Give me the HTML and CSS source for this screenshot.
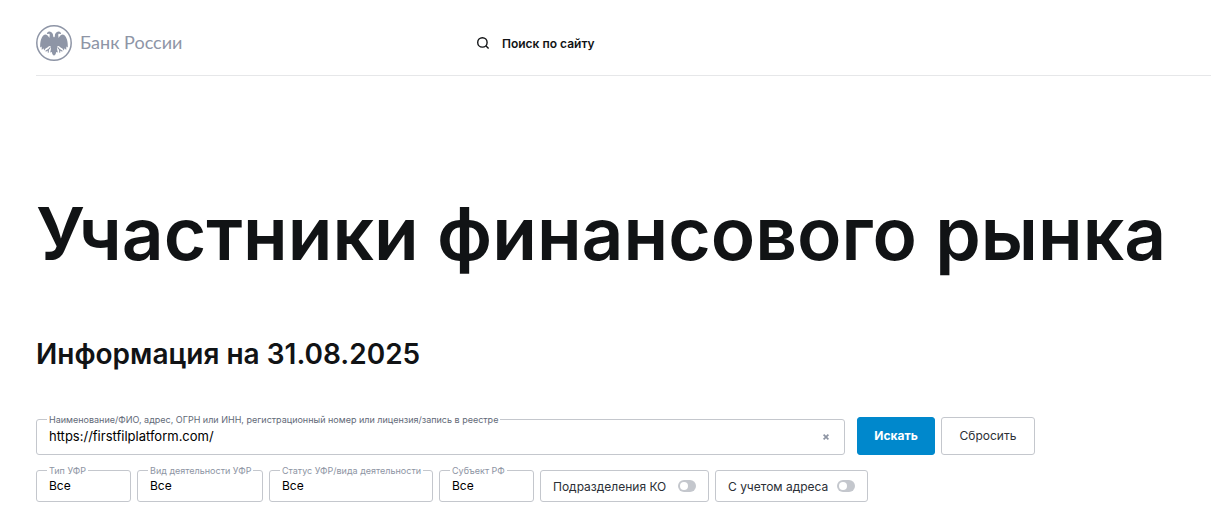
FILE: index.html
```
<!DOCTYPE html>
<html lang="ru">
<head>
<meta charset="utf-8">
<meta name="viewport" content="width=device-width, initial-scale=1">
<title>Участники финансового рынка</title>
<link rel="stylesheet" href="styles.css">
</head>
<body>
<header class="header">
  <a class="logo" href="#">
    <svg class="logo-mark" viewBox="0 0 36 36" aria-hidden="true">
      <circle cx="18" cy="18" r="17.2" fill="none" stroke="currentColor" stroke-width="1.5"/>
      <g fill="currentColor">
        <path id="half" d="M18 12.4 L17.2 11.6 C17.3 8.4 15.6 6.2 13.2 6.4 C11.9 6.5 11 7.6 10.9 9 L13.4 8.8 C14.2 10.2 13.4 11.4 13.4 13 C12.2 10.2 9.6 8.4 7.8 10 C5.2 12.4 4 16.4 4.2 22.6 L5.6 21.4 L5.8 25 L7.4 23.2 L8.2 25.6 L9.6 23.4 L11.4 22.6 L13.2 21 L14.8 21.6 L15 23.4 L14.2 27.6 L15.8 27 L16.4 29.2 L18 30.8 Z"/>
        <path d="M18 12.4 L18.8 11.6 C18.7 8.4 20.4 6.2 22.8 6.4 C24.1 6.5 25 7.6 25.1 9 L22.6 8.8 C21.8 10.2 22.6 11.4 22.6 13 C23.8 10.2 26.4 8.4 28.2 10 C30.8 12.4 32 16.4 31.8 22.6 L30.4 21.4 L30.2 25 L28.6 23.2 L27.8 25.6 L26.4 23.4 L24.6 22.6 L22.8 21 L21.2 21.6 L21 23.4 L21.8 27.6 L20.2 27 L19.6 29.2 L18 30.8 Z"/>
      </g>
      <g fill="none" stroke="currentColor" stroke-width="1.1">
        <path d="M14.4 22.4 L12.4 24.6 L9.6 26.2 M12.4 24.6 L12.2 27.6"/>
        <path d="M21.6 22.4 L23.6 24.6 L26.4 26.2 M23.6 24.6 L23.8 27.6"/>
      </g>
    </svg>
    <span class="logo-text">Банк России</span>
  </a>
  <button class="site-search" type="button">
    <svg class="site-search-icon" viewBox="0 0 14 14" aria-hidden="true">
      <circle cx="6.4" cy="6.4" r="4.7" fill="none" stroke="currentColor" stroke-width="1.4"/>
      <path d="M9.8 9.8 L12.6 12.6" stroke="currentColor" stroke-width="1.4"/>
    </svg>
    Поиск по сайту
  </button>
</header>
<main class="content">
  <h1 class="title">Участники финансового рынка</h1>
  <h2 class="subtitle">Информация на 31.08.2025</h2>
  <form class="form">
    <div class="search-row">
      <div class="field field-search">
        <label class="field-label" for="query">Наименование/ФИО, адрес, ОГРН или ИНН, регистрационный номер или лицензия/запись в реестре</label>
        <input class="field-input" id="query" type="text" value="https://firstfilplatform.com/">
        <button class="clear" type="button" aria-label="Очистить">
          <svg class="clear-icon" viewBox="0 0 6 6" aria-hidden="true"><path d="M.6 .6 L5.4 5.4 M5.4 .6 L.6 5.4" stroke="currentColor" stroke-width="1.7"/></svg>
        </button>
      </div>
      <div class="actions">
        <button class="button button-primary" type="submit">Искать</button>
        <button class="button button-reset" type="reset">Сбросить</button>
      </div>
    </div>
    <div class="filters">
      <div class="field field-short">
        <label class="field-label" for="type">Тип УФР</label>
        <select class="field-select" id="type"><option>Все</option></select>
      </div>
      <div class="field field-medium">
        <label class="field-label" for="activity">Вид деятельности УФР</label>
        <select class="field-select" id="activity"><option>Все</option></select>
      </div>
      <div class="field field-long">
        <label class="field-label" for="status">Статус УФР/вида деятельности</label>
        <select class="field-select" id="status"><option>Все</option></select>
      </div>
      <div class="field field-short">
        <label class="field-label" for="region">Субъект РФ</label>
        <select class="field-select" id="region"><option>Все</option></select>
      </div>
      <label class="toggle toggle-wide">Подразделения КО <input class="switch" type="checkbox"></label>
      <label class="toggle">С учетом адреса <input class="switch" type="checkbox"></label>
    </div>
  </form>
</main>
</body>
</html>
```
FILE: styles.css
```
* { box-sizing: border-box; }

body {
  margin: 0;
  background: #fff;
  color: #111315;
  font-family: Inter, "Liberation Sans", sans-serif;
  font-size: 12px;
}

button, input, select { font: inherit; }

.header {
  display: flex;
  align-items: center;
  margin-left: 36px;
  padding: 25px 0 14px;
  border-bottom: 1px solid #e6e7e9;
}

.logo {
  display: flex;
  align-items: center;
  gap: 8px;
  width: 440px;
  color: #8e95a6;
  text-decoration: none;
}

.logo-mark { width: 36px; height: 36px; }

.logo-text {
  padding-bottom: 2px;
  font-family: Lato, sans-serif;
  font-size: 18px;
  line-height: 20px;
}

.site-search {
  display: flex;
  align-items: center;
  gap: 12px;
  padding: 0;
  border: 0;
  background: none;
  color: #111315;
  font-weight: 600;
}

.site-search-icon { width: 14px; height: 14px; }

.content { padding: 108px 36px 24px; }

.title {
  margin: 0;
  font-size: 73px;
  font-weight: 600;
  line-height: 100px;
  white-space: nowrap;
}

.subtitle {
  margin: 52px 0 0;
  font-size: 28px;
  font-weight: 600;
  line-height: 36px;
}

.form {
  max-width: 999px;
  margin-top: 45px;
}

.search-row {
  display: flex;
  align-items: flex-end;
  gap: 12px;
}

.actions { display: flex; gap: 6px; }

.field {
  position: relative;
  display: flex;
  align-items: center;
  height: 32px;
  border: 1px solid #c4c7cd;
  border-radius: 3px;
}

.field-search { flex: 1; height: 36px; }
.field-short { width: 95px; }
.field-medium { width: 126px; }
.field-long { width: 164px; }

.field-label {
  position: absolute;
  top: -6px;
  left: 10px;
  padding: 0 2px;
  background: #fff;
  color: #8d94a3;
  font-size: 9px;
  line-height: 12px;
  white-space: nowrap;
}

.field-search .field-label { color: #626977; }

.field-input, .field-select {
  flex: 1;
  min-width: 0;
  padding: 0 12px 2px;
  border: 0;
  outline: 0;
  appearance: none;
  background: none;
  color: #000;
}

.field-input { font-size: 13px; }

.clear {
  display: flex;
  margin-right: 15px;
  padding: 0;
  border: 0;
  background: none;
  color: #8d94a3;
}

.clear-icon { width: 6px; height: 6px; }

.button {
  height: 38px;
  padding: 0 0 2px;
  border: 1px solid #c4c7cd;
  border-radius: 3px;
  background: #fff;
  color: #2b2f36;
}

.button-primary {
  width: 78px;
  border-color: #0088cc;
  background: #0088cc;
  color: #fff;
  font-weight: 700;
}

.button-reset { width: 94px; }

.filters {
  display: flex;
  flex-wrap: wrap;
  gap: 6px;
  margin-top: 15px;
}

.toggle {
  display: flex;
  align-items: center;
  justify-content: space-between;
  width: 153px;
  height: 32px;
  padding: 0 12px;
  border: 1px solid #c4c7cd;
  border-radius: 3px;
  color: #2b2f36;
  white-space: nowrap;
}

.toggle-wide { width: 169px; }

.switch {
  display: flex;
  flex: none;
  align-items: center;
  width: 18px;
  height: 12px;
  margin: 0;
  padding: 0 2px;
  appearance: none;
  border-radius: 6px;
  background: #c4c7cd;
}

.switch::before {
  content: "";
  width: 8px;
  height: 8px;
  border-radius: 50%;
  background: #fff;
}

.switch:checked { justify-content: flex-end; background: #0088cc; }
```
